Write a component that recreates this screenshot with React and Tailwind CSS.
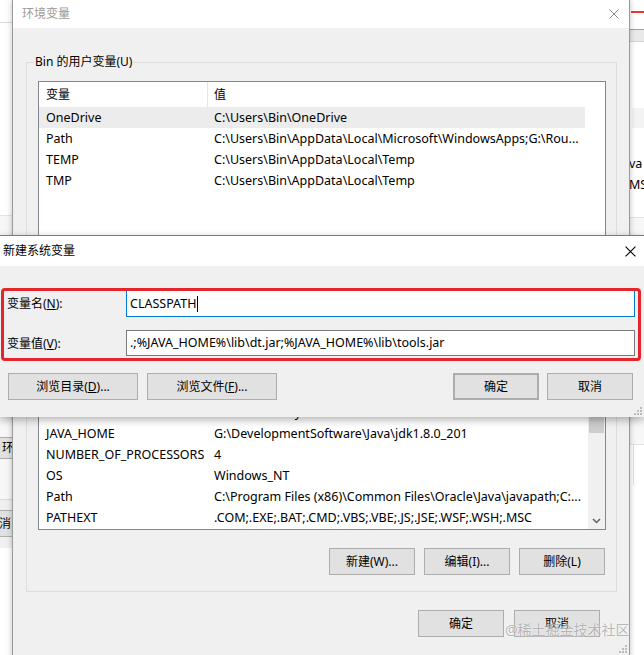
import React from "react";

const FONT = "font-['Noto_Sans','Noto_Sans_CJK_SC',sans-serif]";

function XIcon({ color = "#000", size = 10 }) {
  return (
    <svg width={size} height={size} viewBox="0 0 10 10">
      <path d="M0.5 0.5 L9.5 9.5 M9.5 0.5 L0.5 9.5" stroke={color} strokeWidth="1" fill="none" />
    </svg>
  );
}

function Grip() {
  return (
    <svg width="8" height="8" viewBox="0 0 8 8">
      <rect x="6" y="0" width="2" height="2" fill="#bcbcbc" />
      <rect x="3" y="3" width="2" height="2" fill="#bcbcbc" />
      <rect x="6" y="3" width="2" height="2" fill="#bcbcbc" />
      <rect x="0" y="6" width="2" height="2" fill="#bcbcbc" />
      <rect x="3" y="6" width="2" height="2" fill="#bcbcbc" />
      <rect x="6" y="6" width="2" height="2" fill="#bcbcbc" />
    </svg>
  );
}

function Btn({ children, className = "" }) {
  return (
    <div
      className={`h-[27px] flex items-center justify-center bg-[#e1e1e1] border border-[#adadad] text-[12px] text-black whitespace-nowrap ${className}`}
    >
      {children}
    </div>
  );
}

function Row({ name = "", value = "", selected = false }) {
  return (
    <div className={`flex h-[21px] shrink-0 items-center pt-px w-[546px] text-[12.5px] text-black whitespace-nowrap ${selected ? "bg-[#ececec]" : ""}`}>
      <div className="w-[169px] pl-[7px] overflow-hidden">{name}</div>
      <div className="flex-1 pl-[6px] overflow-hidden">{value}</div>
    </div>
  );
}

function Header() {
  return (
    <div className="flex h-[25px] shrink-0 items-center text-[12px] text-black bg-white">
      <div className="w-[168px] pl-[7px]">变量</div>
      <div className="w-px h-full bg-[#e5e5e5]" />
      <div className="flex-1 pl-[6px]">值</div>
    </div>
  );
}

export default function App() {
  return (
    <div className={`relative w-[644px] h-[655px] overflow-hidden bg-white ${FONT}`}>
      {/* Back window, left strip */}
      <div className="absolute left-0 top-0 w-[13px] h-[655px] bg-white flex flex-col">
        <div className="h-[22px] shrink-0" />
        <div className="h-px bg-[#d9d9d9] shrink-0" />
        <div className="h-[192px] shrink-0" />
        <div className="h-px bg-[#e3e3e3] shrink-0" />
        <div className="h-[200px] shrink-0 bg-[#f7f7f7]" />
        <div className="h-px bg-[#d9d9d9] shrink-0" />
        <div className="h-[20px] shrink-0 bg-[#f7f7f7]" />
        <div className="h-[22px] shrink-0 bg-[#e1e1e1] border-y border-r border-[#adadad] text-[12px] leading-[20px] pl-[2px] overflow-hidden">环</div>
        <div className="h-[40px] shrink-0 bg-[#f7f7f7]" />
        <div className="h-px bg-[#d9d9d9] shrink-0" />
        <div className="h-[10px] shrink-0 bg-[#f0f0f0]" />
        <div className="h-[27px] shrink-0 bg-[#e1e1e1] border-y border-r border-[#adadad] text-[12px] leading-[25px] overflow-hidden flex justify-end pr-[1px] whitespace-nowrap">取消</div>
        <div className="h-[11px] shrink-0 bg-[#f0f0f0]" />
        <div className="flex-1 bg-white" />
      </div>

      {/* Back window, right strip */}
      <div className="absolute left-[629px] top-0 w-[15px] h-[655px] bg-white flex flex-col text-[12.5px] text-black">
        <div className="h-[11px] shrink-0" />
        <div className="h-[2px] ml-[2px] bg-[#e53935] shrink-0" />
        <div className="h-[16px] shrink-0" />
        <div className="h-px bg-[#a0a0a0] shrink-0" />
        <div className="h-[11px] bg-[#e9e9e9] shrink-0" />
        <div className="h-px bg-[#d4d4d4] shrink-0" />
        <div className="h-[66px] shrink-0" />
        <div className="h-[20px] ml-[3px] bg-[#f3f3f3] shrink-0" />
        <div className="h-[25px] shrink-0" />
        <div className="h-[21px] leading-[21px] shrink-0 whitespace-nowrap overflow-hidden">va</div>
        <div className="h-[21px] leading-[21px] shrink-0 whitespace-nowrap overflow-hidden">MS</div>
        <div className="h-[22px] shrink-0" />
        <div className="h-px bg-[#e3e3e3] shrink-0" />
        <div className="h-[226px] shrink-0 bg-[#f7f7f7]" />
        <div className="h-px bg-[#e3e3e3] shrink-0" />
        <div className="h-[40px] shrink-0 ml-[4px] border-l border-[#e3e3e3] bg-white" />
        <div className="flex-1 bg-white" />
      </div>

      {/* Environment variables window */}
      <div className="absolute left-[12px] top-0 w-[618px] h-[700px] bg-[#f0f0f0] border-l border-r border-[#9a9a9a] shadow-[0_0_6px_rgba(0,0,0,0.25)] flex flex-col">
        <div className="h-[28px] shrink-0 bg-white flex items-center justify-between pl-[9px] pr-[10px]">
          <span className="text-[12px] text-[#9a9a9a]">环境变量</span>
          <XIcon color="#8a8a8a" />
        </div>
        <div className="pl-[13px] pr-[12px] pt-[34px] flex flex-col">
          {/* User variables group */}
          <div className="relative h-[228px] border border-[#dcdcdc] pt-[18px] pl-[11px] pr-[10px] flex flex-col">
            <span className="absolute left-[7px] top-[-9px] h-[16px] leading-[16px] bg-[#f0f0f0] px-px text-[12px] text-black">Bin 的用户变量(U)</span>
            <div className="h-[156px] border border-[#828790] bg-white flex flex-col">
              <Header />
              <Row name="OneDrive" value="C:\Users\Bin\OneDrive" selected />
              <Row name="Path" value="C:\Users\Bin\AppData\Local\Microsoft\WindowsApps;G:\Rou..." />
              <Row name="TEMP" value="C:\Users\Bin\AppData\Local\Temp" />
              <Row name="TMP" value="C:\Users\Bin\AppData\Local\Temp" />
            </div>
          </div>

          {/* System variables group (its top is under the dialog) */}
          <div className="relative mt-[4px] border border-[#dcdcdc] pt-[18px] pl-[11px] pr-[10px] pb-[16px] flex flex-col">
            <div className="h-[217px] border border-[#828790] bg-white flex overflow-hidden">
              <div className="flex-1 flex flex-col">
                <div className="h-[25px] shrink-0" />
                <Row />
                <Row />
                <Row />
                <Row name="DriverData" value="C:\Windows\System32\Drivers\DriverData" />
                <Row name="JAVA_HOME" value="G:\DevelopmentSoftware\Java\jdk1.8.0_201" />
                <Row name="NUMBER_OF_PROCESSORS" value="4" />
                <Row name="OS" value="Windows_NT" />
                <Row name="Path" value="C:\Program Files (x86)\Common Files\Oracle\Java\javapath;C:..." />
                <Row name="PATHEXT" value=".COM;.EXE;.BAT;.CMD;.VBS;.VBE;.JS;.JSE;.WSF;.WSH;.MSC" />
              </div>
              <div className="w-[17px] shrink-0 bg-[#f0f0f0] flex flex-col">
                <div className="h-[17px] shrink-0" />
                <div className="h-[20px] shrink-0" />
                <div className="h-[82px] mx-[1px] shrink-0 bg-[#cdcdcd]" />
                <div className="flex-1" />
                <div className="h-[17px] shrink-0 flex items-center justify-center">
                  <svg width="9" height="6" viewBox="0 0 9 6">
                    <path d="M1 1 L4.5 4.5 L8 1" stroke="#606060" strokeWidth="1.5" fill="none" />
                  </svg>
                </div>
              </div>
            </div>
            <div className="mt-[18px] flex justify-end gap-[9px] pr-px">
              <Btn className="w-[86px]">新建(W)...</Btn>
              <Btn className="w-[86px]">编辑(I)...</Btn>
              <Btn className="w-[86px]">删除(L)</Btn>
            </div>
          </div>

          <div className="mt-[18px] flex justify-end gap-[10px] pr-[17px]">
            <Btn className="w-[86px]">确定</Btn>
            <Btn className="w-[86px]">取消</Btn>
          </div>
        </div>
      </div>
      <div className="absolute left-[619px] top-[645px]">
        <Grip />
      </div>

      {/* New system variable dialog */}
      <div className="absolute left-0 top-[235px] w-[644px] h-[182px] bg-[#f0f0f0] border-t border-[#7a7a7a] shadow-[0_3px_8px_rgba(0,0,0,0.3)] flex flex-col">
        <div className="h-[30px] shrink-0 bg-white flex items-center justify-between pl-[3px] pr-[8px]">
          <span className="text-[12px] text-black">新建系统变量</span>
          <XIcon color="#000" size={11} />
        </div>
        <div className="flex-1 pl-[7px] pr-[9px] pt-[24px] pb-[17px] flex flex-col text-[12px] text-black">
          <div className="flex items-center h-[27px]">
            <div className="w-[119px] shrink-0 pt-px">
              变量名(<span className="underline">N</span>):
            </div>
            <div className="flex-1 h-full bg-white border border-[#0078d7] flex items-center pl-[3px] pt-[2px] text-[12.5px]">
              <span>CLASSPATH</span>
              <span className="w-px h-[16px] bg-black ml-[1px] mb-[2px]" />
            </div>
          </div>
          <div className="flex items-center h-[26px] mt-[13px]">
            <div className="w-[119px] shrink-0 pt-px">
              变量值(<span className="underline">V</span>):
            </div>
            <div className="flex-1 h-full bg-white border border-[#7a7a7a] flex items-center pl-[3px] pt-px whitespace-nowrap overflow-hidden text-[12.5px]">
              .;%JAVA_HOME%\lib\dt.jar;%JAVA_HOME%\lib\tools.jar
            </div>
          </div>
          <div className="flex items-center mt-[17px] pl-px pr-[2px]">
            <Btn className="w-[130px]">
              浏览目录(<span className="underline">D</span>)...
            </Btn>
            <Btn className="w-[130px] ml-[9px]">
              浏览文件(<span className="underline">F</span>)...
            </Btn>
            <div className="flex-1" />
            <Btn className="w-[86px] border-2 border-[#0078d7]">确定</Btn>
            <Btn className="w-[86px] ml-[8px]">取消</Btn>
          </div>
        </div>
        <div className="absolute right-[2px] bottom-[2px]">
          <Grip />
        </div>
      </div>

      {/* Red annotation box */}
      <div className="absolute left-px top-[288px] w-[640px] h-[73px] border-[3px] border-[#e3262b] rounded-[4px] pointer-events-none" />

      {/* Watermark */}
      <div className="absolute left-[505px] top-[620px] text-[14px] leading-[20px] text-[#9a9a9a]/70 whitespace-nowrap [text-shadow:0_0_2px_#ffffff]">
        @稀土掘金技术社区
      </div>
    </div>
  );
}
